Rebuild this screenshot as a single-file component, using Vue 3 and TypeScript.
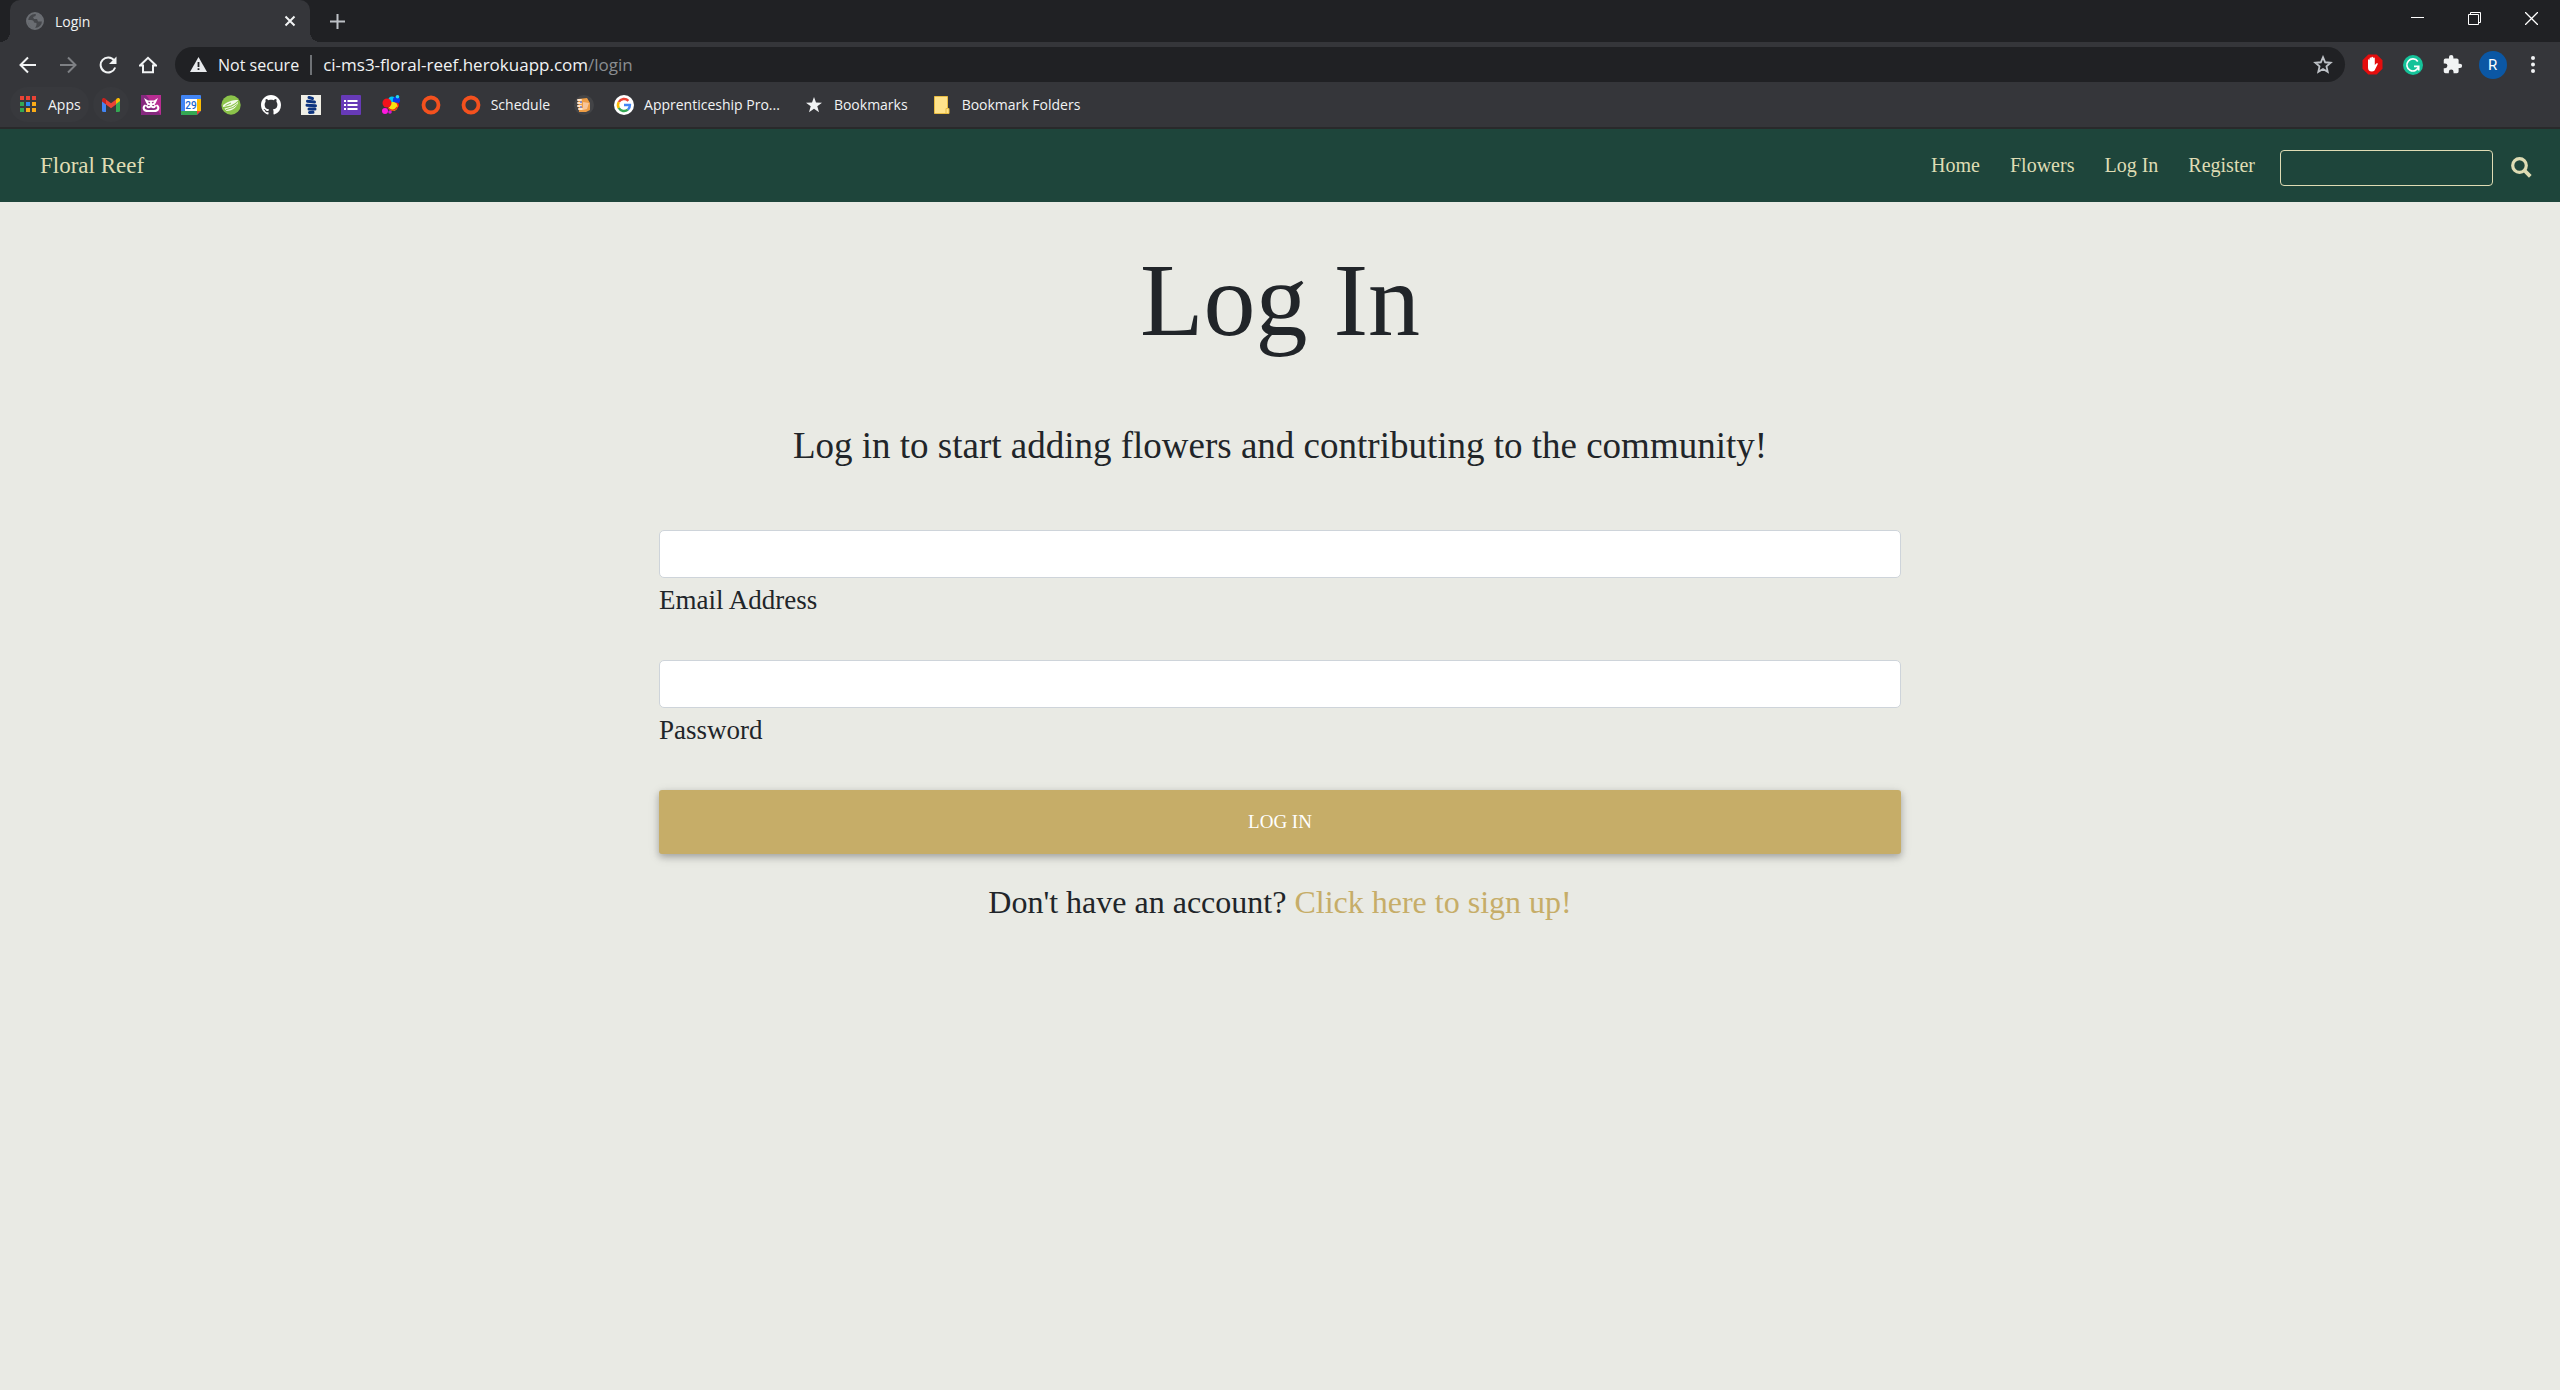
<script setup lang="ts">
import { ref } from 'vue'

interface Bookmark {
  id: string
  title: string
  label?: string
}

const bookmarks: Bookmark[] = [
  { id: 'apps', title: 'Apps', label: 'Apps' },
  { id: 'gmail', title: 'Gmail' },
  { id: 'mask', title: 'Team' },
  { id: 'calendar', title: 'Calendar' },
  { id: 'leaf', title: 'Wellbeing' },
  { id: 'github', title: 'GitHub' },
  { id: 'balsamiq', title: 'Wireframes' },
  { id: 'forms', title: 'Forms' },
  { id: 'balloons', title: 'Balloons' },
  { id: 'ring', title: 'Course' },
  { id: 'ring', title: 'Schedule', label: 'Schedule' },
  { id: 'fist', title: 'Support' },
  { id: 'google', title: 'Apprenticeship', label: 'Apprenticeship Pro...' },
  { id: 'star', title: 'Bookmarks', label: 'Bookmarks' },
  { id: 'folder', title: 'Bookmark Folders', label: 'Bookmark Folders' },
]

const appColors = ['#ea4335', '#ea4335', '#ea4335', '#34a853', '#2a8bf2', '#fbac18', '#34a853', '#fbac18', '#fbac18']

const navLinks = ['Home', 'Flowers', 'Log In', 'Register']

const query = ref('')
const email = ref('')
const password = ref('')
</script>

<template>
  <div class="window">
    <header class="browser">
      <div class="tabstrip">
        <div class="tab">
          <svg class="favicon" viewBox="0 0 18 18" aria-hidden="true">
            <circle cx="9" cy="9" r="8" fill="#45474b" stroke="#6a6d72" stroke-width="2" />
            <path d="M1.500 8L5 8Q8 8 8 10.500L10.500 11V13L9 16.500C5 16.500 2 13 1.500 8ZM10 1.500L9.500 4L7 5L8 7L11 7L12 9.500H16.500C16.500 5 13 1.500 10 1.500Z" fill="#6a6d72" />
          </svg>
          <span class="tab-title">Login</span>
          <button class="tab-close" type="button" aria-label="Close tab">
            <svg width="12" height="12" viewBox="0 0 12 12"><path d="M1.500 1.500L10.500 10.500M10.500 1.500L1.500 10.500" stroke="#f1f3f4" stroke-width="2" /></svg>
          </button>
        </div>
        <button class="tab-new" type="button" aria-label="New tab">
          <svg width="15" height="15" viewBox="0 0 15 15"><path d="M7.500 0V15M0 7.500H15" stroke="#bdc1c6" stroke-width="2" /></svg>
        </button>
        <div class="window-controls">
          <button type="button" aria-label="Minimise"><svg width="13" height="13" viewBox="0 0 13 13"><path d="M0 5.500H13" stroke="#fff" /></svg></button>
          <button type="button" aria-label="Restore"><svg width="13" height="13" viewBox="0 0 13 13" fill="none" stroke="#fff"><path d="M.5 2.500H10.500V12.500H.5ZM2.500 2.500V.5H12.500V10.500H10.500" /></svg></button>
          <button type="button" aria-label="Close"><svg width="13" height="13" viewBox="0 0 13 13"><path d="M0 0L13 13M13 0L0 13" stroke="#fff" stroke-width="1.300" /></svg></button>
        </div>
      </div>

      <div class="toolbar">
        <div class="tools">
          <button type="button" aria-label="Back"><svg width="18" height="18" viewBox="0 0 18 18" fill="none" stroke="#f1f3f4" stroke-width="2"><path d="M17 9H2M9 1.500L1.500 9L9 16.500" /></svg></button>
          <button type="button" aria-label="Forward"><svg width="18" height="18" viewBox="0 0 18 18" fill="none" stroke="#7e8084" stroke-width="2"><path d="M1 9H16M9 1.500L16.500 9L9 16.500" /></svg></button>
          <button type="button" aria-label="Reload"><svg width="18" height="18" viewBox="0 0 18 18"><path d="M15.200 4.500A7.500 7.500 0 1 0 16.200 11.500" fill="none" stroke="#f1f3f4" stroke-width="2" /><path d="M17.500 .5V8H10Z" fill="#f1f3f4" /></svg></button>
          <button type="button" aria-label="Home"><svg width="18" height="18" viewBox="0 0 18 18" fill="none" stroke="#f1f3f4" stroke-width="2"><path d="M1 9.500H4V16.200H14V9.500H17L9 1.800Z" /></svg></button>
        </div>
        <div class="omnibox">
          <svg class="warning" width="17" height="15" viewBox="0 0 17 15" aria-hidden="true"><path d="M8.500 0L17 15H0Z" fill="#e8eaed" /><path d="M7.600 5H9.400V10H7.600ZM7.600 11.200H9.400V13H7.600Z" fill="#202124" /></svg>
          <span class="security">Not secure</span>
          <span class="separator"></span>
          <span class="url">ci-ms3-floral-reef.herokuapp.com<span class="path">/login</span></span>
          <button class="favourite" type="button" aria-label="Bookmark this tab">
            <svg width="20" height="19" viewBox="0 0 24 23"><path d="M12 2.700L14.600 8.800L21.300 9.400L16.200 13.800L17.700 20.300L12 16.900L6.300 20.300L7.800 13.800L2.700 9.400L9.400 8.800Z" fill="none" stroke="#bdc1c6" stroke-width="2.200" /></svg>
          </button>
        </div>
        <div class="tools">
          <button type="button" aria-label="Ad blocker">
            <svg width="21" height="21" viewBox="0 0 21 21"><path d="M6.300 .5H14.700L20.500 6.300V14.700L14.700 20.500H6.300L.5 14.700V6.300Z" fill="#e40d0d" /><path d="M6 6.200C6 5 7.600 5 7.600 6.200V4.500C7.600 3.200 9.200 3.200 9.300 4.500V3.600C9.400 2.400 11 2.400 11.100 3.600V4.500C11.200 3.200 12.800 3.400 12.800 4.600V11L14.300 9.400C15.300 8.800 16.200 9.400 15.700 10.300L13.300 15C12.600 16.800 11.600 17.500 10 17.500C7.200 17.500 6 16 6 13.500Z" fill="#fff" /></svg>
          </button>
          <button type="button" aria-label="Writing assistant">
            <svg width="20" height="20" viewBox="0 0 20 20"><circle cx="10" cy="10" r="10" fill="#15c39a" /><path d="M14.800 6.500A6 6 0 1 0 15.700 11.500M11 11.300H15.700V15.500" fill="none" stroke="#fff" stroke-width="1.700" /></svg>
          </button>
          <button type="button" aria-label="Extensions">
            <svg width="21" height="21" viewBox="0 0 24 24"><path d="M20.500 11H19V7a2 2 0 0 0-2-2h-4V3.500a2.500 2.500 0 0 0-5 0V5H4a2 2 0 0 0-2 2v3.800h1.500a2.700 2.700 0 0 1 0 5.400H2V20a2 2 0 0 0 2 2h3.800v-1.500a2.700 2.700 0 0 1 5.400 0V22H17a2 2 0 0 0 2-2v-4h1.500a2.500 2.500 0 0 0 0-5z" fill="#f1f3f4" /></svg>
          </button>
          <button class="profile" type="button" aria-label="Profile"><span>R</span></button>
          <button type="button" aria-label="Menu">
            <svg width="4" height="17" viewBox="0 0 4 17" fill="#f1f3f4"><circle cx="2" cy="2" r="2" /><circle cx="2" cy="8.500" r="2" /><circle cx="2" cy="15" r="2" /></svg>
          </button>
        </div>
      </div>

      <nav class="bookmarks" aria-label="Bookmarks">
        <a v-for="(mark, index) in bookmarks" :key="index" href="#" :title="mark.title" :class="{ raised: index < 2, wide: index > 1 && mark.label }">
          <svg width="20" height="20" viewBox="0 0 20 20" aria-hidden="true">
            <template v-if="mark.id === 'apps'">
              <rect v-for="(color, i) in appColors" :key="i" :x="2 + (i % 3) * 6" :y="1 + Math.floor(i / 3) * 6" width="4" height="4" :fill="color" />
            </template>
            <template v-else-if="mark.id === 'gmail'">
              <path d="M1 5V15.500Q1 17 2.500 17H5V8Z" fill="#4285f4" />
              <path d="M15 8V17H17.500Q19 17 19 15.500V5Z" fill="#34a853" />
              <path d="M15 4.500V9L19 6V5C19 3 17 2.500 15.500 3.700Z" fill="#fbbc04" />
              <path d="M5 4.500L10 8.200L15 4.500V9.500L10 13.200L5 9.500Z" fill="#ea4335" />
              <path d="M1 5V6.500L5 9.500V4L4.500 3.700C3 2.500 1 3 1 5Z" fill="#c5221f" />
            </template>
            <template v-else-if="mark.id === 'mask'">
              <rect width="20" height="20" fill="#86297f" /><path d="M5 0H20V20Z" fill="#b92d92" />
              <path d="M3 3L7 5.500H13L17 3L15 7.500L13.500 10H6.500L5 7.500Z" fill="#fff" />
              <path d="M4 10.500C1.500 12.500 2.500 16 7 16H13C17.500 16 18.500 12.500 16 10.500M6 11C7 13 9 12.500 10 10.500C11 12.500 13 13 14 11" fill="none" stroke="#fff" stroke-width="2" stroke-linecap="round" />
              <path d="M7.500 7L9 8M12.500 7L11 8" stroke="#9a2a88" stroke-width="1.200" />
            </template>
            <template v-else-if="mark.id === 'calendar'">
              <rect width="20" height="20" rx="1" fill="#4285f4" /><path d="M16 4H20V16H16Z" fill="#fbbc04" /><path d="M0 16H16V20H1L0 19Z" fill="#34a853" /><path d="M16 16H20L16 20Z" fill="#ea4335" /><path d="M20 16V20H16Z" fill="#35363a" /><rect x="4" y="4" width="12" height="12" fill="#fff" />
              <text x="10" y="14" text-anchor="middle" font-family="Roboto, sans-serif" font-size="10" font-weight="500" fill="#1967d2">29</text>
            </template>
            <template v-else-if="mark.id === 'leaf'">
              <circle cx="10" cy="10" r="9.700" fill="#8bc34a" /><path d="M2 10.500C5 7 11 5 17.500 5C15 7.500 13 9 10 10.500L2 12Z" fill="#f3faeb" /><path d="M3.500 13.500L10.500 11.500C13.500 10 15.500 8.500 17 6.500C17 11 12 16 5.500 16Z" fill="#f3faeb" /><path d="M5 14.700L12 12.500L16 9.500M4.500 10.500L10 8" fill="none" stroke="#8bc34a" />
            </template>
            <path v-else-if="mark.id === 'github'" transform="scale(1.250)" d="M8 0C3.580 0 0 3.580 0 8c0 3.540 2.290 6.530 5.470 7.590.4.070.55-.17.55-.38 0-.19-.01-.82-.01-1.490-2.010.37-2.530-.49-2.690-.94-.09-.23-.48-.94-.82-1.130-.28-.15-.68-.52-.01-.53.63-.01 1.080.58 1.230.82.72 1.210 1.870.87 2.330.66.07-.52.28-.87.51-1.070-1.780-.2-3.640-.89-3.640-3.950 0-.87.31-1.590.82-2.150-.08-.2-.36-1.020.08-2.120 0 0 .67-.21 2.200.82.64-.18 1.320-.27 2-.27s1.360.09 2 .27c1.530-1.040 2.200-.82 2.200-.82.44 1.100.16 1.920.08 2.120.51.56.82 1.270.82 2.150 0 3.070-1.870 3.750-3.650 3.950.29.25.54.73.54 1.480 0 1.070-.01 1.930-.01 2.200 0 .21.15.46.55.38A8.010 8.010 0 0 0 16 8c0-4.420-3.580-8-8-8z" fill="#fff" />
            <template v-else-if="mark.id === 'balsamiq'">
              <rect width="20" height="20" fill="#f0efe6" /><path d="M8 2.500L11.500 3.500M6.500 6.200L13.500 7M6 10.200L14.500 10.800M8 14L14 14M8.500 17.500L12 17.300" stroke="#0d347f" stroke-width="3" stroke-linecap="round" />
            </template>
            <template v-else-if="mark.id === 'forms'">
              <rect width="20" height="20" rx="1" fill="#673ab7" /><path d="M3 5H5V7H3ZM6.500 5H16.500V7H6.500ZM3 9H5V11H3ZM6.500 9H16.500V11H6.500ZM3 13H5V15H3ZM6.500 13H16.500V15H6.500Z" fill="#fff" />
            </template>
            <template v-else-if="mark.id === 'balloons'">
              <circle cx="11" cy="5" r="3.600" fill="#00c8f4" /><circle cx="15.500" cy="5" r="3.600" fill="#0a3bea" /><circle cx="16.500" cy="1.800" r="1.800" fill="#25d8ef" /><circle cx="15.500" cy="10" r="2.500" fill="#f3121b" /><circle cx="12" cy="11.500" r="4.600" fill="#f8e010" /><circle cx="6" cy="8" r="4.500" fill="#f3121b" /><path d="M7 13Q12 18 16.500 12" fill="none" stroke="#e8301a" stroke-width="1.500" /><circle cx="4" cy="16" r="3" fill="#ff18df" /><circle cx="9" cy="17" r="1.800" fill="#d616d5" />
            </template>
            <circle v-else-if="mark.id === 'ring'" cx="10" cy="10" r="7.500" fill="none" stroke="#f4511e" stroke-width="3.800" />
            <template v-else-if="mark.id === 'fist'">
              <circle cx="10" cy="10" r="10" fill="#434447" /><path d="M4 4L13 3L16 8V15L12 17H5Z" fill="#ee9d45" /><path d="M4 5H7M4 8H7M4 11H7M5 14H8" stroke="#fde4cb" stroke-width="2" stroke-linecap="round" /><path d="M9 7L15 8L13 14L9 15Z" fill="#f7c59a" /><path d="M6 7H8M6 12H8" stroke="#6b80d8" stroke-width="1.500" />
            </template>
            <template v-else-if="mark.id === 'google'">
              <circle cx="10" cy="10" r="10" fill="#fff" /><g fill="none" stroke-width="2.500"><path d="M14.400 5.800A6 6 0 0 0 4.800 7" stroke="#ea4335" /><path d="M4.800 7A6 6 0 0 0 4.800 13" stroke="#fbbc05" /><path d="M4.800 13A6 6 0 0 0 13.900 14.600" stroke="#34a853" /><path d="M13.900 14.600A6 6 0 0 0 15.900 10H10" stroke="#4285f4" /></g>
            </template>
            <path v-else-if="mark.id === 'star'" d="M10 2L12 7.500L18 7.700L13.300 11.300L15 17.200L10 13.800L5 17.200L6.700 11.300L2 7.700L8 7.500Z" fill="#f1f3f4" />
            <template v-else>
              <path d="M2.500 1.500H15.500V13.500H17V18.500H2.500Z" fill="#ffe38b" stroke="#e8bc42" /><path d="M14 18.500V13.500H15.500" fill="none" stroke="#e8bc42" />
            </template>
          </svg>
          <span v-if="mark.label">{{ mark.label }}</span>
        </a>
      </nav>
    </header>

    <div class="site">
      <nav class="navbar" aria-label="Main">
        <a class="brand" href="#">Floral Reef</a>
        <div class="nav-links">
          <a v-for="link in navLinks" :key="link" href="#">{{ link }}</a>
        </div>
        <form class="search" @submit.prevent>
          <input v-model="query" type="text" aria-label="Search flowers" />
          <button type="submit" aria-label="Search">
            <svg width="21" height="21" viewBox="0 0 21 21" fill="none" stroke="#dfdcb4"><circle cx="8.500" cy="8.500" r="6.800" stroke-width="3.200" /><path d="M13.500 13.500L19.300 19.300" stroke-width="3.800" /></svg>
          </button>
        </form>
      </nav>

      <main>
        <h1>Log In</h1>
        <p class="lead">Log in to start adding flowers and contributing to the community!</p>
        <form class="login" @submit.prevent>
          <div class="field">
            <input id="email" v-model="email" type="email" />
            <label for="email">Email Address</label>
          </div>
          <div class="field">
            <input id="password" v-model="password" type="password" />
            <label for="password">Password</label>
          </div>
          <button class="submit" type="submit">LOG IN</button>
        </form>
        <p class="signup">Don't have an account? <a href="#">Click here to sign up!</a></p>
      </main>
    </div>
  </div>
</template>

<style>
body {
  margin: 0;
  background: #e9eae4;
}
</style>

<style scoped>
* {
  box-sizing: border-box;
}

button {
  display: flex;
  align-items: center;
  justify-content: center;
  padding: 0;
  border: 0;
  background: none;
  font: inherit;
  cursor: pointer;
}

a {
  text-decoration: none;
}

svg {
  display: block;
  flex: none;
}

.window {
  display: flex;
  flex-direction: column;
  min-height: 100vh;
}

/* Browser chrome */
.browser {
  background: #35363a;
  border-bottom: 2px solid #292a2b;
  color: #f1f3f4;
  font-family: "Open Sans", "Noto Sans", sans-serif;
  font-size: 14px;
}

.tabstrip {
  display: flex;
  height: 42px;
  padding-left: 10px;
  background: #202124;
}

.tab {
  position: relative;
  display: flex;
  align-items: center;
  width: 300px;
  padding: 0 12px 0 16px;
  border-radius: 10px 10px 0 0;
  background: #35363a;
}

.tab::before,
.tab::after {
  content: "";
  position: absolute;
  bottom: 0;
  width: 10px;
  height: 10px;
}

.tab::before {
  right: 100%;
  background: radial-gradient(circle at 0 0, #202124 10px, #35363a 10px);
}

.tab::after {
  left: 100%;
  background: radial-gradient(circle at 100% 0, #202124 10px, #35363a 10px);
}

.favicon {
  width: 18px;
  height: 18px;
}

.tab-title {
  flex: 1;
  margin-left: 11px;
}

.tab-close {
  width: 16px;
  height: 16px;
}

.tab-new {
  width: 35px;
  margin-left: 10px;
}

.window-controls {
  display: flex;
  height: 37px;
  margin-left: auto;
}

.window-controls button {
  width: 57px;
}

.toolbar {
  display: flex;
  align-items: center;
  gap: 10px;
  height: 45px;
  padding: 0 10px;
}

.tools {
  display: flex;
  gap: 5px;
}

.tools button {
  width: 35px;
  height: 35px;
}

.profile span {
  width: 28px;
  border-radius: 50%;
  background: #0b57a4;
  color: #fff;
  font-family: Roboto, sans-serif;
  font-size: 15px;
  line-height: 28px;
}

.omnibox {
  display: flex;
  flex: 1;
  align-items: center;
  height: 35px;
  padding: 0 12px 0 15px;
  border-radius: 18px;
  background: #202124;
  font-size: 16px;
}

.security {
  margin-left: 11px;
}

.separator {
  width: 2px;
  height: 20px;
  margin: 0 11px;
  background: #6f7276;
}

.url {
  font-size: 17px;
}

.path {
  color: #8a8d91;
}

.favourite {
  margin-left: auto;
}

.bookmarks {
  display: flex;
  gap: 4px;
  height: 40px;
  padding: 0 10px 5px;
}

.bookmarks a {
  display: flex;
  align-items: center;
  gap: 10px;
  padding: 0 8px;
  border-radius: 18px;
  color: #f1f3f4;
  white-space: nowrap;
}

.bookmarks .wide {
  padding-right: 12px;
}

.bookmarks .raised {
  background: #38393d;
}

/* Site */
.site {
  flex: 1;
  background: #e9eae4;
  color: #212529;
  font-family: "Liberation Serif", "Times New Roman", serif;
}

.navbar {
  display: flex;
  align-items: center;
  height: 73px;
  padding: 0 28px 0 40px;
  background: #1e453b;
}

.navbar a {
  color: #dfdcb4;
  font-size: 20px;
}

.navbar .brand {
  font-size: 23px;
}

.nav-links {
  display: flex;
  gap: 30px;
  margin-left: auto;
}

.search {
  display: flex;
  align-items: center;
  gap: 18px;
  margin: 4px 0 0 25px;
}

.search input {
  width: 213px;
  height: 36px;
  padding: 0 10px;
  border: 1px solid #dfdcb4;
  border-radius: 4px;
  background: transparent;
  color: #dfdcb4;
  font: inherit;
}

main {
  display: flex;
  flex-direction: column;
  align-items: center;
  padding: 36px 20px;
}

h1 {
  margin: 0 0 62px;
  font-size: 104px;
  font-weight: 400;
  line-height: 124px;
}

p {
  margin: 0;
  text-align: center;
}

.lead {
  font-size: 37px;
  line-height: 44px;
}

.login {
  display: flex;
  flex-direction: column;
  gap: 43px;
  width: calc(50% - 18px);
  margin: 62px 0 28px;
}

.field {
  display: flex;
  flex-direction: column;
  align-items: flex-start;
  gap: 6px;
}

.field input {
  width: 100%;
  height: 48px;
  padding: 0 15px;
  border: 1px solid #ced4da;
  border-radius: 5px;
  background: #fff;
  color: #212529;
  font: inherit;
  font-size: 20px;
}

.field label {
  font-size: 27px;
  line-height: 33px;
}

.submit {
  height: 64px;
  border-radius: 3px;
  background: #c6ad68;
  box-shadow: 0 3px 6px rgba(0, 0, 0, 0.2), 0 3px 12px rgba(0, 0, 0, 0.14);
  color: #fff;
  font-size: 19px;
}

.signup {
  font-size: 32px;
  line-height: 40px;
}

.signup a {
  color: #c6ad68;
}
</style>
